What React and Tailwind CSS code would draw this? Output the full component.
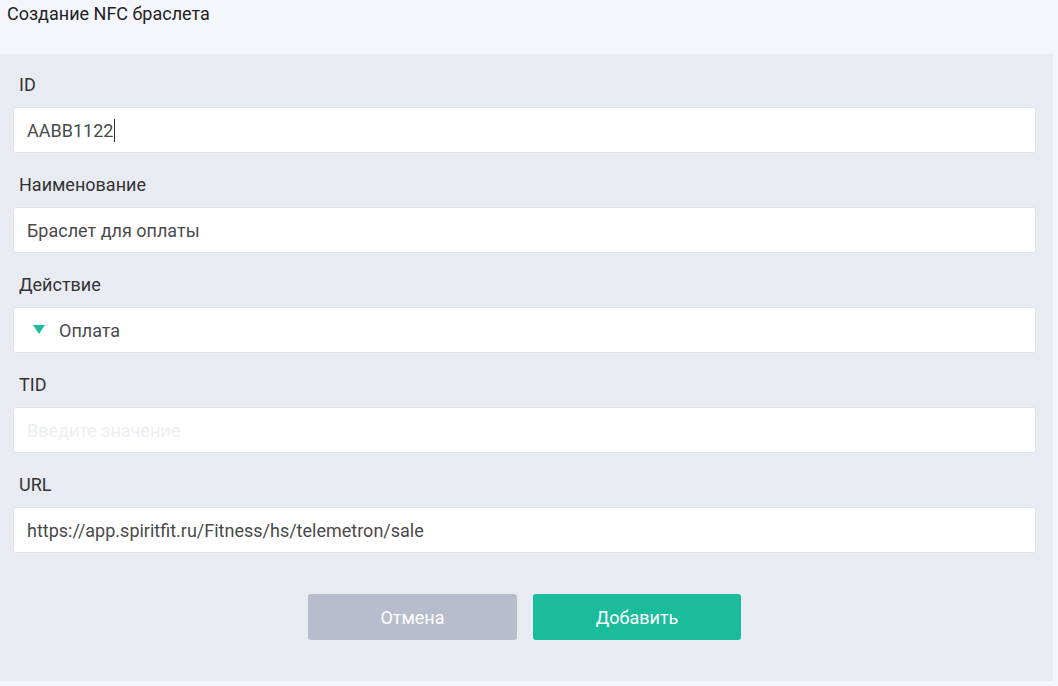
import { useState } from 'react'

function Field({ label, children, first }) {
  return (
    <div className={first ? '' : 'mt-[19px]'}>
      <div className="pl-[6px] leading-[26px] mb-[9px] text-[18px] text-[#333333]">{label}</div>
      {children}
    </div>
  )
}

function Box({ children }) {
  return (
    <div className="h-[46px] flex items-center px-[13px] bg-white border border-[#dfe2ea] rounded-[3px] text-[18px] text-[#4a4a4a]">
      {children}
    </div>
  )
}

export default function App() {
  const [action] = useState('Оплата')

  return (
    <div className="w-[1058px] h-[686px] bg-[#f5f6fb] font-['Roboto',sans-serif] overflow-hidden">
      <header className="h-[54px] pl-[7px] pt-[2px] text-[18px] leading-[24px] text-[#222222]">
        Создание NFC браслета
      </header>
      <div className="w-[1053px] bg-[#e8ebf2] pt-[18px] pb-[41px] pl-[13px] pr-[17px]">
        <Field label="ID" first>
          <Box>
            <span>AABB1122</span>
            <span className="inline-block w-px h-[23px] bg-[#333333] ml-px" />
          </Box>
        </Field>
        <Field label="Наименование">
          <Box>Браслет для оплаты</Box>
        </Field>
        <Field label="Действие">
          <Box>
            <svg width="12" height="10" viewBox="0 0 12 10" className="ml-[6px] mr-[14px]">
              <path d="M0 0H12L6 9Z" fill="#1bbc9b" />
            </svg>
            <span>{action}</span>
          </Box>
        </Field>
        <Field label="TID">
          <Box>
            <span className="text-[#eceef3]">Введите значение</span>
          </Box>
        </Field>
        <Field label="URL">
          <Box>https://app.spiritfit.ru/Fitness/hs/telemetron/sale</Box>
        </Field>
        <div className="flex justify-center gap-[16px] mt-[41px]">
          <button className="w-[209px] h-[46px] rounded-[3px] bg-[#b7bdcc] text-white text-[18px]">
            Отмена
          </button>
          <button className="w-[208px] h-[46px] rounded-[3px] bg-[#1bbc9b] text-white text-[18px]">
            Добавить
          </button>
        </div>
      </div>
    </div>
  )
}
